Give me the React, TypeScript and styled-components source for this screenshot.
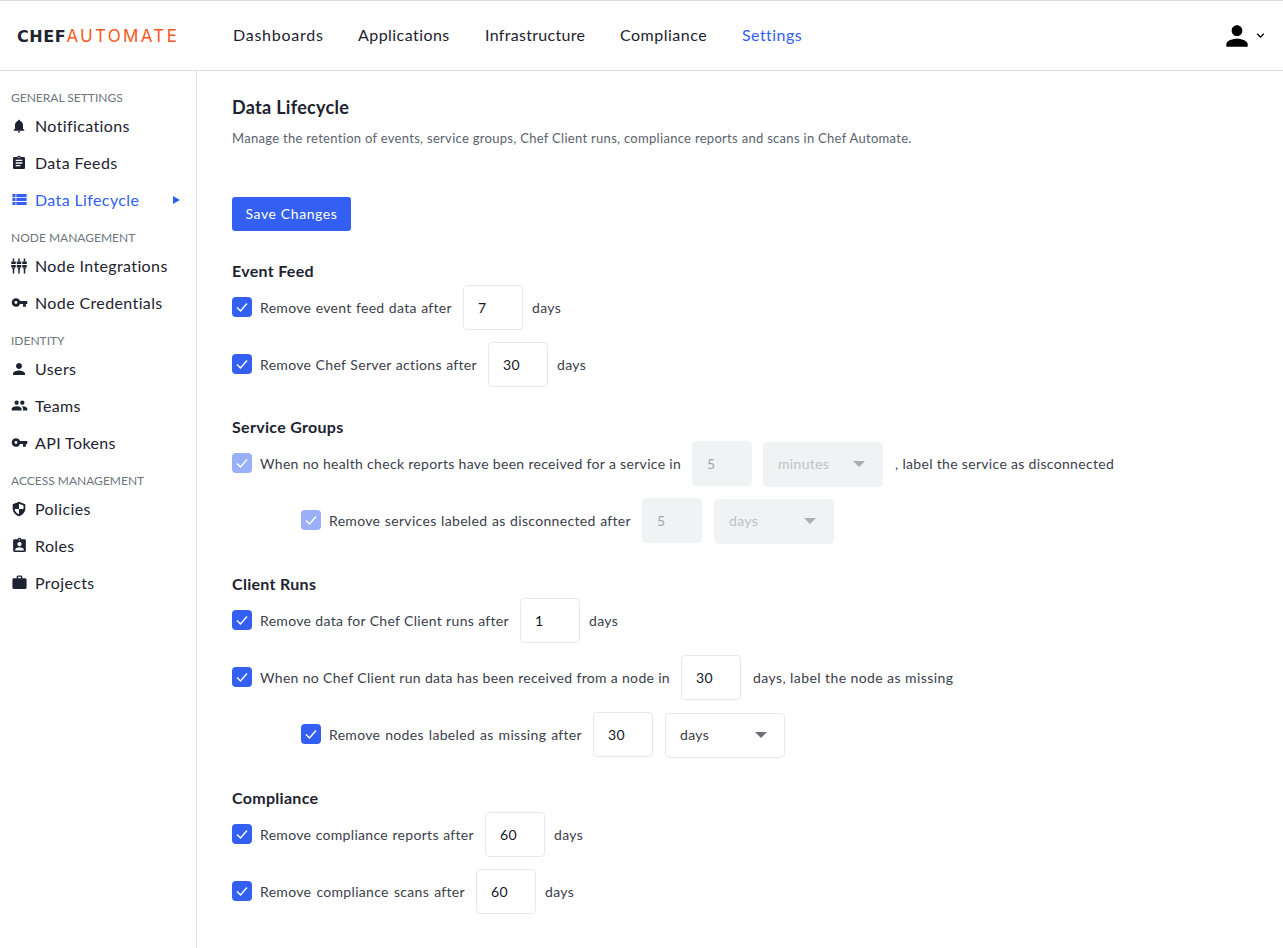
import React from "react";
import styled, { createGlobalStyle } from "styled-components";
import {
  MdNotifications,
  MdAssignment,
  MdViewList,
  MdVpnKey,
  MdPerson,
  MdPeople,
  MdAssignmentInd,
  MdWork,
  MdKeyboardArrowDown,
} from "react-icons/md";

const FONT = `"Lato", "Noto Sans", sans-serif`;
const BLUE = "#3360f2";
const INK = "#1d2330";

const GlobalStyle = createGlobalStyle`
  * { box-sizing: border-box; }
  html, body { margin: 0; padding: 0; background: #fff; }
  body { font-family: ${FONT}; color: ${INK}; overflow: hidden; }
`;

const Page = styled.div`
  width: 1283px;
  height: 948px;
  display: flex;
  flex-direction: column;
  background: #fff;
`;

const Header = styled.header`
  height: 71px;
  flex: none;
  display: flex;
  align-items: center;
  border-top: 1px solid #d8dadf;
  border-bottom: 1px solid #d9dee0;
  padding: 0 17px;
`;

const Logo = styled.div`
  width: 216px;
  font-family: "DejaVu Sans", sans-serif;
  font-size: 16px;
  letter-spacing: 0.6px;
  font-weight: 700;
  color: #1f2433;
  white-space: nowrap;

  span {
    font-family: "Inter", sans-serif;
    font-size: 17px;
    font-weight: 400;
    color: #f4591f;
    letter-spacing: 2.3px;
  }
`;

const Nav = styled.nav`
  display: flex;
  gap: 35px;
  flex: 1;
  padding-bottom: 2px;
`;

const NavLink = styled.a<{ $active?: boolean; $w: number; $spacing: number }>`
  width: ${(p) => p.$w}px;
  font-size: 16px;
  letter-spacing: ${(p) => p.$spacing}px;
  white-space: nowrap;
  color: ${(p) => (p.$active ? BLUE : INK)};
`;

const UserMenu = styled.div`
  display: flex;
  align-items: center;
  color: #000;
  margin-right: -2px;
`;

const Body = styled.div`
  flex: 1;
  display: flex;
`;

const Sidebar = styled.aside`
  width: 197px;
  flex: none;
  border-right: 1px solid #d9dee0;
  padding: 18px 0 0 11px;
`;

const GroupLabel = styled.div`
  height: 18px;
  line-height: 18px;
  font-size: 12px;
  color: #6f7680;
  text-transform: uppercase;
  margin-top: 11px;

  &:first-child {
    margin-top: 0;
  }
`;

const SideItem = styled.a<{ $active?: boolean }>`
  height: 37px;
  display: flex;
  align-items: center;
  font-size: 16px;
  letter-spacing: 0.38px;
  color: ${(p) => (p.$active ? BLUE : INK)};
  padding-right: 16px;

  svg {
    flex: none;
  }
`;

const SideIcon = styled.span`
  width: 16px;
  height: 16px;
  flex: none;
  display: flex;
  align-items: center;
  justify-content: center;
  margin-right: 8px;
`;

const ActiveArrow = styled.svg`
  margin-left: auto;
`;

const Content = styled.main`
  flex: 1;
  padding: 26px 0 0 35px;
`;

const Title = styled.h1`
  margin: 0;
  font-size: 18px;
  line-height: 21px;
  font-weight: 700;
  letter-spacing: 0.3px;
  color: ${INK};
`;

const Subtitle = styled.p`
  margin: 11px 0 0;
  font-size: 13px;
  line-height: 18px;
  letter-spacing: 0.3px;
  color: #5b626c;
`;

const SaveButton = styled.button`
  display: block;
  margin-top: 50px;
  width: 119px;
  height: 34px;
  border: 0;
  border-radius: 3px;
  background: ${BLUE};
  color: #fff;
  font-family: ${FONT};
  font-size: 14px;
  letter-spacing: 0.6px;
  padding: 0 0 2px;
`;

const Section = styled.section`
  margin-top: 28px;
`;

const SectionTitle = styled.h2`
  margin: 0 0 2px;
  font-size: 16px;
  line-height: 24px;
  font-weight: 700;
  letter-spacing: 0.3px;
  color: ${INK};
`;

const Row = styled.div<{ $nested?: boolean }>`
  height: ${(p) => (p.$nested ? "46px" : "45px")};
  display: flex;
  align-items: center;
  margin-top: 12px;
  padding: 0 0 ${(p) => (p.$nested ? "1px" : "0")} ${(p) => (p.$nested ? "69px" : "0")};
  font-size: 14px;
  letter-spacing: 0.32px;
  color: #3b404b;

  ${SectionTitle} + & {
    margin-top: 0;
  }
`;

const RowLabel = styled.span<{ $w: number }>`
  width: ${(p) => p.$w}px;
  flex: none;
  margin-right: 11px;
  white-space: nowrap;
  text-align-last: justify;
`;

const Check = styled.span<{ $disabled?: boolean }>`
  width: 20px;
  height: 20px;
  flex: none;
  border-radius: 4px;
  background: ${(p) => (p.$disabled ? "#99b0f8" : BLUE)};
  display: flex;
  align-items: center;
  justify-content: center;
  margin: 0 8px 1px 0;
`;

const NumberBox = styled.span<{ $disabled?: boolean }>`
  width: 60px;
  height: 45px;
  flex: none;
  padding-left: 14px;
  display: flex;
  align-items: center;
  border-radius: 4px;
  border: 1px solid ${(p) => (p.$disabled ? "#f0f3f4" : "#e6e9ec")};
  background: ${(p) => (p.$disabled ? "#f0f3f4" : "#fff")};
  color: ${(p) => (p.$disabled ? "#9fa5ab" : "#14181f")};
`;

const SelectBox = styled.span<{ $disabled?: boolean; $tight?: boolean }>`
  width: 120px;
  height: 45px;
  flex: none;
  margin: 2px 0 0 ${(p) => (p.$tight ? "11px" : "12px")};
  padding: 0 17px 2px 14px;
  display: flex;
  align-items: center;
  justify-content: space-between;
  border-radius: 4px;
  border: 1px solid ${(p) => (p.$disabled ? "#f0f3f4" : "#e6e9ec")};
  background: ${(p) => (p.$disabled ? "#f0f3f4" : "#fff")};
  color: ${(p) => (p.$disabled ? "#bcc1c6" : "#3b404b")};
`;

const Caret = styled.span<{ $disabled?: boolean }>`
  width: 0;
  height: 0;
  border-left: 6px solid transparent;
  border-right: 6px solid transparent;
  border-top: 6px solid ${(p) => (p.$disabled ? "#a9aeb4" : "#6a6f78")};
`;

const After = styled.span<{ $tight?: boolean; $wide?: boolean }>`
  margin-left: ${(p) => (p.$tight ? "9px" : "12px")};
  letter-spacing: ${(p) => (p.$wide ? "0.42px" : "0.32px")};
`;

const Tick = () => (
  <svg width="14" height="14" viewBox="0 0 14 14" fill="none">
    <path d="M2 7.5 L5.500 11 L12 3.500" stroke="#fff" strokeWidth="1.4" />
  </svg>
);

const IntegrationsIcon = () => (
  <svg width="16" height="16" viewBox="0 0 16 16" fill="currentColor">
    {[2.5, 8, 13.5].map((x) => (
      <g key={x}>
        <rect x={x - 0.75} y="0.500" width="1.500" height="3" />
        <rect x={x - 2.25} y="3.500" width="4.500" height="2.500" />
        <rect x={x - 2.25} y="7" width="4.500" height="2.500" />
        <path d={`M${x - 1.5} 9.500 h3 l-0.750 2 v4 h-1.500 v-4 z`} />
      </g>
    ))}
  </svg>
);

const ShieldIcon = () => (
  <svg width="16" height="16" viewBox="0 0 16 16" fill="currentColor">
    <path
      d="M8 0.800 L14.300 3.200 V7.500 C14.300 11 11.700 14.200 8 15.300 C4.300 14.200 1.700 11 1.700 7.500 V3.200 Z M8 2.800 V8 H3.600 C4 10.500 5.600 12.500 8 13.300 V8 H12.500 V4.400 Z"
      fillRule="evenodd"
    />
  </svg>
);

const NAV_LINKS = [
  { label: "Dashboards", w: 90, spacing: 0.75 },
  { label: "Applications", w: 92, spacing: 0.45 },
  { label: "Infrastructure", w: 100, spacing: 0.3 },
  { label: "Compliance", w: 87, spacing: 0.5 },
  { label: "Settings", w: 60, spacing: 0.45, active: true },
];

const App = () => {
  return (
    <>
      <GlobalStyle />
      <Page>
        <Header>
          <Logo>
            CHEF<span>AUTOMATE</span>
          </Logo>
          <Nav>
            {NAV_LINKS.map((link) => (
              <NavLink key={link.label} $w={link.w} $spacing={link.spacing} $active={link.active}>
                {link.label}
              </NavLink>
            ))}
          </Nav>
          <UserMenu>
            <MdPerson size={32} />
            <MdKeyboardArrowDown size={15} />
          </UserMenu>
        </Header>
        <Body>
          <Sidebar>
            <GroupLabel>General Settings</GroupLabel>
            <SideItem>
              <SideIcon><MdNotifications size={16} /></SideIcon>
              Notifications
            </SideItem>
            <SideItem>
              <SideIcon><MdAssignment size={16} /></SideIcon>
              Data Feeds
            </SideItem>
            <SideItem $active>
              <SideIcon><MdViewList size={19} /></SideIcon>
              Data Lifecycle
              <ActiveArrow width="8" height="8" viewBox="0 0 8 8" fill={BLUE}>
                <path d="M1 0 L8 4 L1 8 Z" />
              </ActiveArrow>
            </SideItem>

            <GroupLabel>Node Management</GroupLabel>
            <SideItem>
              <SideIcon><IntegrationsIcon /></SideIcon>
              Node Integrations
            </SideItem>
            <SideItem>
              <SideIcon><MdVpnKey size={17} /></SideIcon>
              Node Credentials
            </SideItem>

            <GroupLabel>Identity</GroupLabel>
            <SideItem>
              <SideIcon><MdPerson size={18} /></SideIcon>
              Users
            </SideItem>
            <SideItem>
              <SideIcon><MdPeople size={17} /></SideIcon>
              Teams
            </SideItem>
            <SideItem>
              <SideIcon><MdVpnKey size={17} /></SideIcon>
              API Tokens
            </SideItem>

            <GroupLabel>Access Management</GroupLabel>
            <SideItem>
              <SideIcon><ShieldIcon /></SideIcon>
              Policies
            </SideItem>
            <SideItem>
              <SideIcon><MdAssignmentInd size={17} /></SideIcon>
              Roles
            </SideItem>
            <SideItem>
              <SideIcon><MdWork size={17} /></SideIcon>
              Projects
            </SideItem>
          </Sidebar>

          <Content>
            <Title>Data Lifecycle</Title>
            <Subtitle>
              Manage the retention of events, service groups, Chef Client runs, compliance reports and scans in Chef Automate.
            </Subtitle>
            <SaveButton>Save Changes</SaveButton>

            <Section>
              <SectionTitle>Event Feed</SectionTitle>
              <Row>
                <Check><Tick /></Check>
                <RowLabel $w={192}>Remove event feed data after</RowLabel>
                <NumberBox>7</NumberBox>
                <After $tight>days</After>
              </Row>
              <Row>
                <Check><Tick /></Check>
                <RowLabel $w={217}>Remove Chef Server actions after</RowLabel>
                <NumberBox>30</NumberBox>
                <After $tight>days</After>
              </Row>
            </Section>

            <Section>
              <SectionTitle>Service Groups</SectionTitle>
              <Row>
                <Check $disabled><Tick /></Check>
                <RowLabel $w={421}>When no health check reports have been received for a service in</RowLabel>
                <NumberBox $disabled>5</NumberBox>
                <SelectBox $disabled $tight>
                  minutes
                  <Caret $disabled />
                </SelectBox>
                <After>, label the service as disconnected</After>
              </Row>
              <Row $nested>
                <Check $disabled><Tick /></Check>
                <RowLabel $w={302}>Remove services labeled as disconnected after</RowLabel>
                <NumberBox $disabled>5</NumberBox>
                <SelectBox $disabled>
                  days
                  <Caret $disabled />
                </SelectBox>
              </Row>
            </Section>

            <Section>
              <SectionTitle>Client Runs</SectionTitle>
              <Row>
                <Check><Tick /></Check>
                <RowLabel $w={249}>Remove data for Chef Client runs after</RowLabel>
                <NumberBox>1</NumberBox>
                <After $tight>days</After>
              </Row>
              <Row>
                <Check><Tick /></Check>
                <RowLabel $w={410}>When no Chef Client run data has been received from a node in</RowLabel>
                <NumberBox>30</NumberBox>
                <After $wide>days, label the node as missing</After>
              </Row>
              <Row $nested>
                <Check><Tick /></Check>
                <RowLabel $w={253}>Remove nodes labeled as missing after</RowLabel>
                <NumberBox>30</NumberBox>
                <SelectBox>
                  days
                  <Caret />
                </SelectBox>
              </Row>
            </Section>

            <Section>
              <SectionTitle>Compliance</SectionTitle>
              <Row>
                <Check><Tick /></Check>
                <RowLabel $w={214}>Remove compliance reports after</RowLabel>
                <NumberBox>60</NumberBox>
                <After $tight>days</After>
              </Row>
              <Row>
                <Check><Tick /></Check>
                <RowLabel $w={205}>Remove compliance scans after</RowLabel>
                <NumberBox>60</NumberBox>
                <After $tight>days</After>
              </Row>
            </Section>
          </Content>
        </Body>
      </Page>
    </>
  );
};

export default App;
